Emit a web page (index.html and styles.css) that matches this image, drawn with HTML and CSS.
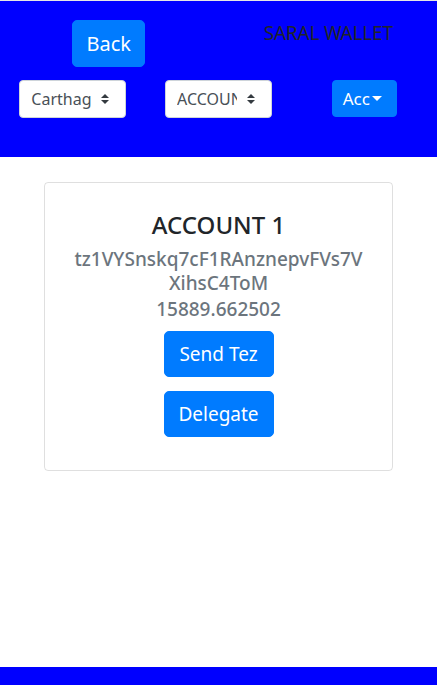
FILE: index.html
```html
<!DOCTYPE html>
<html>
<head>
<meta charset="utf-8">
<link rel="stylesheet" href="styles.css">
</head>
<body>
<div class="page">
  <header class="top">
    <div class="row row-top">
      <div class="col"><button class="btn btn-lg">Back</button></div>
      <div class="col brand-col"><span class="brand">SARAL WALLET</span></div>
    </div>
    <div class="row row-bottom">
      <div class="col">
        <div class="select"><span class="select-text">Carthagenet</span>
          <svg class="arrows" width="8" height="10" viewBox="0 0 4 5"><path d="M2 0L0 2h4zm0 5L0 3h4z" fill="#343a40"/></svg>
        </div>
      </div>
      <div class="col">
        <div class="select"><span class="select-text">ACCOUNT 1</span>
          <svg class="arrows" width="8" height="10" viewBox="0 0 4 5"><path d="M2 0L0 2h4zm0 5L0 3h4z" fill="#343a40"/></svg>
        </div>
      </div>
      <div class="col">
        <button class="btn btn-drop"><span class="drop-text">Acc</span><span class="caret"></span></button>
      </div>
    </div>
  </header>
  <main class="content">
    <div class="card">
      <h4 class="title">ACCOUNT 1</h4>
      <div class="muted address"><span class="line">tz1VYSnskq7cF1RAnznepvFVs7V</span><span class="line">XihsC4ToM</span></div>
      <div class="muted balance">15889.662502</div>
      <button class="btn btn-lg card-btn">Send Tez</button>
      <button class="btn btn-lg card-btn">Delegate</button>
    </div>
  </main>
  <footer class="bottom"></footer>
</div>
</body>
</html>
```
FILE: styles.css
```css
* { box-sizing: border-box; }
html, body { margin: 0; padding: 0; }
body {
  font-family: "Noto Sans", "Open Sans", sans-serif;
  color: #212529;
  background: #fff;
}
.page {
  min-height: 100vh;
  display: flex;
  flex-direction: column;
  border-top: 1px solid #e6e6e6;
}
.top {
  background: #0000ff;
  height: 156px;
  padding-top: 19px;
  display: flex;
  flex-direction: column;
  gap: 13px;
}
.row { display: flex; }
.row-top .col { flex: 1; display: flex; justify-content: center; align-items: flex-start; }
.row-bottom .col { flex: 1; display: flex; justify-content: center; }
.brand-col { padding-top: 2px; padding-left: 2px; }
.brand {
  font-size: 19px;
  line-height: 1.2;
  color: #212529;
  letter-spacing: -0.2px;
}
.btn {
  font-family: inherit;
  background: #007bff;
  color: #fff;
  border: 1px solid #007bff;
  border-radius: 4px;
  cursor: pointer;
}
.btn-lg {
  font-size: 19px;
  line-height: 28px;
  padding: 8px 16px;
  border-radius: 5px;
}
.row-top .btn-lg { width: 73px; padding: 8px 0; height: 47px; font-size: 20px; }
.select {
  width: 107px;
  height: 38px;
  background: #fff;
  border: 1px solid #ced4da;
  border-radius: 4px;
  display: flex;
  align-items: center;
  padding: 0 16px 0 11px;
  gap: 10px;
  color: #495057;
  font-size: 16px;
}
.select-text {
  flex: 1;
  overflow: hidden;
  white-space: nowrap;
}
.arrows { flex: none; }
.btn-drop {
  width: 65px;
  height: 37px;
  font-size: 17px;
  padding: 0 8px 0 10px;
  display: flex;
  align-items: center;
  gap: 2px;
}
.caret {
  width: 0; height: 0;
  border-left: 5px solid transparent;
  border-right: 5px solid transparent;
  border-top: 5px solid #fff;
}
.content {
  flex: 1;
  padding: 25px 44px;
}
.card {
  border: 1px solid rgba(0,0,0,.125);
  border-radius: 4px;
  padding: 28px 20px 33px;
  display: flex;
  flex-direction: column;
  align-items: center;
  text-align: center;
}
.title {
  margin: 0 0 7px;
  font-size: 24px;
  font-weight: 500;
  line-height: 1.2;
  color: #212529;
}
.muted {
  color: #6c757d;
  font-size: 19px;
  font-weight: 500;
  line-height: 24px;
}
.line { display: block; }
.balance { margin-top: 2px; margin-bottom: 10px; }
.card-btn { width: 110px; padding: 8px 0; height: 46px; margin-bottom: 14px; }
.card-btn:last-child { margin-bottom: 0; }
.bottom {
  background: #0000ff;
  height: 18px;
}
```
